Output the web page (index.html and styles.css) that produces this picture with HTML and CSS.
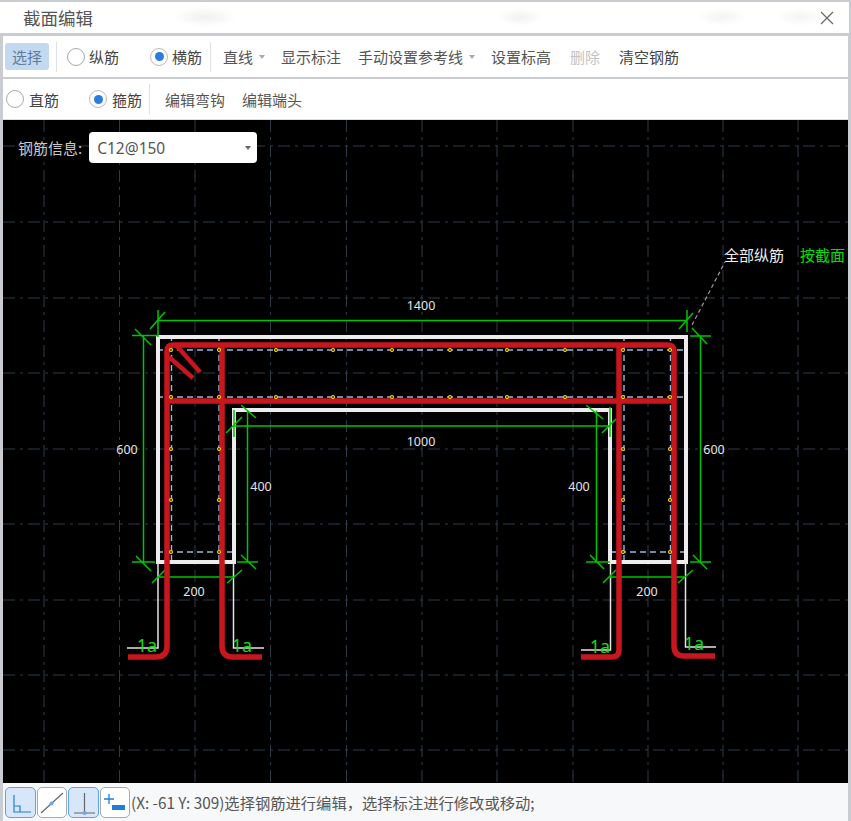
FILE: index.html
```html
<!DOCTYPE html>
<html lang="zh">
<head>
<meta charset="utf-8">
<title>截面编辑</title>
<link rel="stylesheet" href="styles.css">
</head>
<body>
<div class="win">
  <header class="title"><span class="title-text">截面编辑</span>
    <svg class="close" width="14" height="14" viewBox="0 0 14 14"><path d="M1 1L13 13M13 1L1 13" stroke="#666" stroke-width="1.2" fill="none"/></svg>
  </header>
  <div class="bar bar1">
    <span class="btn-active">选择</span>
    <i class="sep sep-a"></i>
    <label class="radio r-zong"><i class="dot"></i>纵筋</label>
    <label class="radio r-heng"><i class="dot on"></i>横筋</label>
    <i class="sep sep-b"></i>
    <span class="drop">直线<i class="caret"></i></span>
    <span class="act a-show">显示标注</span>
    <span class="act a-ref">手动设置参考线<i class="caret"></i></span>
    <span class="act a-level">设置标高</span>
    <span class="act a-del">删除</span>
    <span class="act a-clear">清空钢筋</span>
  </div>
  <div class="bar bar2">
    <label class="radio r-zhi"><i class="dot"></i>直筋</label>
    <label class="radio r-gu"><i class="dot on"></i>箍筋</label>
    <i class="sep sep-c"></i>
    <span class="act a-hook">编辑弯钩</span>
    <span class="act a-end">编辑端头</span>
  </div>
  <main class="canvas">
    <svg class="draw" width="845" height="663" viewBox="3 120 845 663">
      <defs>
        <g id="d"><circle r="1.700" fill="#6a5810" stroke="#e8c020" stroke-width="1"/></g>
      </defs>
      <g class="grid">
        <path d="M44 120V783M119.500 120V783M195 120V783M270.500 120V783M346.500 120V783M422 120V783M497 120V783M573 120V783M648 120V783M723 120V783M798 120V783"/>
        <path d="M3 146H848M3 222H848M3 298H848M3 373H848M3 449H848M3 524H848M3 600H848M3 675H848M3 750H848"/>
      </g>
      <g class="hint">
        <path d="M157 350H686M157 397H686M171.500 335V562M219 335V562M624 335V562M670.500 335V562M157 552H234M610 552H686"/>
      </g>
      <path class="leader" d="M692 325L725 262"/>
      <g class="wall">
        <path d="M234 562V410H610V562H686V337H158V562Z"/>
      </g>
      <path class="thin" d="M158 562V648H127M233.500 562V648H264M610.500 562V650H581M685.500 562V647H716"/>
      <g class="dim">
        <path d="M158 320.500H686M158 310V337M687 310V332M150 329L165 312M679 329L693 313"/>
        <path d="M143.500 335.500V562M132 335.500H158M135 329L151 345M132 562H155M136 556L151 571"/>
        <path d="M700.500 336V562H690M690 336H711M692 328L707 344M711 562H690M693 555L707 569"/>
        <path d="M234 426H610M247.500 410.500V562M234 410V437M226 433L242 417M241 405L256 418"/>
        <path d="M596.500 410.500V562M610 407V437M586 405L603 419M602 433L616 419"/>
        <path d="M237 562H258M241 555L256 569M586 562H610M590 555L604 569"/>
        <path d="M158 577H233M152 583L165 570M227 583L242 570M610 577H685M603 583L616 570M678 583L693 570"/>
      </g>
      <g class="rebar">
        <path d="M128 657H156Q167 657 167 646V351Q167 345 173 345H668Q674 345 674 351V646Q674 656 684 656H715"/>
        <path d="M167 401H674M222 345V646Q222 657 233 657H262M619 345V650Q619 657 612 657H581"/>
        <path class="hook" d="M175 344L200 372M169 357L193 378"/>
      </g>
      <g class="dots">
        <use href="#d" x="171" y="350"/><use href="#d" x="219" y="350"/><use href="#d" x="276" y="350"/><use href="#d" x="333" y="350"/><use href="#d" x="392" y="350"/><use href="#d" x="450" y="350"/><use href="#d" x="507" y="350"/><use href="#d" x="565" y="350"/><use href="#d" x="623" y="350"/><use href="#d" x="670" y="350"/>
        <use href="#d" x="171" y="397"/><use href="#d" x="219" y="397"/><use href="#d" x="276" y="397"/><use href="#d" x="333" y="397"/><use href="#d" x="392" y="397"/><use href="#d" x="450" y="397"/><use href="#d" x="507" y="397"/><use href="#d" x="565" y="397"/><use href="#d" x="623" y="397"/><use href="#d" x="670" y="397"/>
        <use href="#d" x="171" y="449"/><use href="#d" x="219" y="449"/><use href="#d" x="623" y="449"/><use href="#d" x="670" y="449"/>
        <use href="#d" x="171" y="500"/><use href="#d" x="219" y="500"/><use href="#d" x="623" y="500"/><use href="#d" x="670" y="500"/>
        <use href="#d" x="171" y="552"/><use href="#d" x="219" y="552"/><use href="#d" x="623" y="552"/><use href="#d" x="670" y="552"/>
      </g>
      <g class="lbl">
        <text x="421" y="310">1400</text>
        <text x="421" y="446">1000</text>
        <text x="127" y="454">600</text>
        <text x="714" y="454">600</text>
        <text x="261" y="491">400</text>
        <text x="579" y="491">400</text>
        <text x="194" y="596">200</text>
        <text x="647" y="596">200</text>
      </g>
      <g class="one-a">
        <text x="147" y="652">1a</text>
        <text x="242" y="652">1a</text>
        <text x="600" y="653">1a</text>
        <text x="694" y="650">1a</text>
      </g>
      <text class="note" x="724" y="261">全部纵筋</text>
      <text class="note-g" x="800" y="261">按截面</text>
    </svg>
    <div class="info">
      <span class="info-label">钢筋信息:</span>
      <div class="select">C12@150<i class="caret caret-dark"></i></div>
    </div>
  </main>
  <footer class="status">
    <span class="tool on">
      <svg width="30" height="30" viewBox="0 0 30 30"><path d="M8 7V24H25" fill="none" stroke="#1e7fd8" stroke-width="1.2"/><path d="M8.500 18H14V24" fill="none" stroke="#1e7fd8" stroke-width="1.2"/></svg>
    </span>
    <span class="tool">
      <svg width="30" height="30" viewBox="0 0 30 30"><path d="M4 25L26 5" stroke="#666" stroke-width="1.2" fill="none"/><circle cx="14.500" cy="15.500" r="2" fill="#6aa9e6"/></svg>
    </span>
    <span class="tool on">
      <svg width="30" height="30" viewBox="0 0 30 30"><path d="M5 25H26M15.500 5V25" stroke="#666" stroke-width="1.2" fill="none"/><circle cx="15.500" cy="25" r="2" fill="#6aa9e6"/></svg>
    </span>
    <span class="tool">
      <svg width="30" height="30" viewBox="0 0 30 30"><path d="M4 11H14M9 6V16" stroke="#1e7fd8" stroke-width="1.3" fill="none"/><rect x="12" y="17" width="13" height="5" fill="#1e7fd8"/></svg>
    </span>
    <span class="status-text">(X: -61 Y: 309)选择钢筋进行编辑，选择标注进行修改或移动;</span>
  </footer>
</div>
</body>
</html>
```
FILE: styles.css
```css
* { box-sizing: border-box; }
html, body { margin: 0; padding: 0; }
body {
  width: 851px;
  height: 821px;
  overflow: hidden;
  background: #c9ccd1;
  font-family: "Noto Sans CJK SC", "Noto Sans", sans-serif;
  font-size: 15px;
  color: #444;
}
.win { display: flex; flex-direction: column; height: 821px; padding-top: 2px; }
.title {
  height: 31px;
  margin-right: 2px;
  background:
    radial-gradient(ellipse 32px 10px at 205px 15px, #f0f0f0, transparent),
    radial-gradient(ellipse 24px 9px at 520px 15px, #f2f2f2, transparent),
    radial-gradient(ellipse 24px 9px at 722px 15px, #f3f3f3, transparent),
    radial-gradient(ellipse 24px 9px at 800px 15px, #f4f4f4, transparent),
    #fff;
  display: flex;
  align-items: center;
  justify-content: space-between;
  padding: 0 15px 0 23px;
}
.title-text { font-size: 17.500px; line-height: 31px; color: #555; }
.bar {
  margin: 0 3px;
  background: #fff;
  display: flex;
  align-items: center;
  white-space: nowrap;
}
.bar1 { height: 41px; margin-top: 3px; padding-left: 2px; }
.bar2 { height: 41px; margin-top: 2px; padding-left: 3px; border-bottom: 1px solid #ddd; }
.btn-active {
  width: 44px;
  height: 27px;
  line-height: 27px;
  text-align: center;
  background: #c3d9f0;
  border-radius: 3px;
  color: #5f7c9c;
}
.sep { display: block; width: 1px; height: 30px; background: #dcdfe3; }
.sep-a { margin-left: 7px; }
.sep-b { margin-left: 8px; }
.sep-c { margin-left: 7px; }
.radio { display: flex; align-items: center; gap: 4px; color: #444; }
.dot {
  display: block;
  width: 18px;
  height: 18px;
  border-radius: 50%;
  border: 1px solid #aaa;
  background: #fff;
  position: relative;
}
.dot.on::after {
  content: "";
  position: absolute;
  left: 3.500px;
  top: 3.500px;
  width: 9px;
  height: 9px;
  border-radius: 50%;
  background: #2b7de0;
}
.dot.on { border-color: #bbb; }
.r-zong { margin-left: 10px; }
.r-heng { margin-left: 31px; }
.r-zhi { margin-left: 0; gap: 5px; }
.r-gu { margin-left: 30px; gap: 5px; }
.drop { margin-left: 12px; display: flex; align-items: center; color: #555; }
.caret {
  display: inline-block;
  width: 0;
  height: 0;
  border-left: 3px solid transparent;
  border-right: 3px solid transparent;
  border-top: 4px solid #aaa;
  margin-left: 6px;
}
.act { display: flex; align-items: center; color: #555; }
.a-show { margin-left: 16px; }
.a-ref { margin-left: 17px; }
.a-level { margin-left: 16px; }
.a-del { margin-left: 19px; color: #c4c4c4; }
.a-clear { margin-left: 19px; color: #444; }
.a-hook { margin-left: 15px; }
.a-end { margin-left: 17px; }
.canvas {
  position: relative;
  height: 663px;
  margin: 0 3px;
  background: #000;
  flex: none;
}
.draw { display: block; }
.grid path { fill: none; stroke: #2c3a48; stroke-width: 1; stroke-dasharray: 12 5 3 5; }
.hint path { fill: none; stroke: #9ab8d8; stroke-width: 1.400; stroke-dasharray: 6 4; }
.leader { fill: none; stroke: #999; stroke-width: 1.200; stroke-dasharray: 4 3; }
.wall path { fill: none; stroke: #ececec; stroke-width: 4; }
.thin { fill: none; stroke: #e4e4e4; stroke-width: 1.500; }
.dim path { fill: none; stroke: #00c400; stroke-width: 1.500; }
.rebar path { fill: none; stroke: #c8161d; stroke-width: 5.500; }
.rebar .hook { stroke-width: 4.500; }
.lbl text { fill: #e4e4e4; font-family: "Noto Sans", sans-serif; font-size: 12.500px; text-anchor: middle; }
.one-a text { fill: #1cd81c; font-family: "Noto Sans", sans-serif; font-size: 18px; text-anchor: middle; }
.note { fill: #eee; font-size: 15px; }
.note-g { fill: #00e000; font-size: 15px; }
.info {
  position: absolute;
  left: 15px;
  top: 12px;
  display: flex;
  align-items: center;
  gap: 7px;
}
.info-label { color: #c8c8c8; font-size: 15px; }
.select {
  width: 168px;
  height: 31px;
  background: #fff;
  border-radius: 4px;
  display: flex;
  align-items: center;
  justify-content: space-between;
  padding: 0 6px 0 8px;
  color: #555;
  font-family: "Noto Sans", sans-serif;
  font-size: 15.500px;
}
.caret-dark { border-top-color: #666; }
.status {
  flex: 1;
  margin: 0 3px;
  background: #f7f8f9;
  display: flex;
  align-items: center;
  padding-left: 2px;
  gap: 1px;
}
.tool {
  display: block;
  width: 30.500px;
  height: 31px;
  border: 1.500px solid #aaa;
  border-radius: 5px;
  background: #fff;
  margin-top: 1px;
  line-height: 0;
}
.tool svg { margin: -0.500px; }
.tool.on { border-color: #5ba3ea; background: #d7e6f9; }
.status-text { margin-left: 0; color: #555; font-size: 15.300px; white-space: nowrap; }
```
